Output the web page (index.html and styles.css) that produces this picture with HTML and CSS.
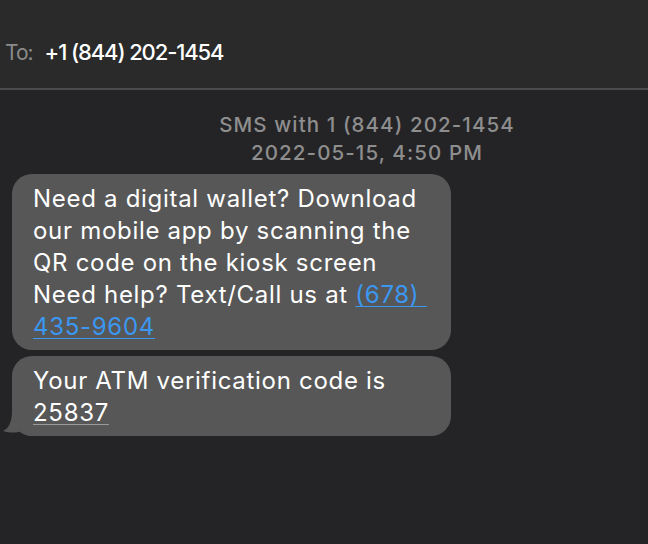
FILE: index.html
```html
<!DOCTYPE html>
<html>
<head>
<meta charset="utf-8">
<link rel="stylesheet" href="styles.css">
</head>
<body>
<div class="app">
  <header class="to-bar">
    <span class="to-label">To:</span>
    <span class="to-number">+1 (844) 202-1454</span>
  </header>
  <main class="thread">
    <div class="meta">
      <div>SMS with 1 (844) 202-1454</div>
      <div>2022-05-15, 4:50 PM</div>
    </div>
    <div class="bubbles">
      <div class="bubble">Need a digital wallet? Download our mobile app by scanning the QR code on the kiosk screen Need help? Text/Call us at <a class="link" href="#">(678)&nbsp;<br><span class="nowrap">435-9604</span></a></div>
      <div class="bubble last">Your ATM verification code is <span class="code">25837</span>
        <svg class="tail" width="30" height="25" viewBox="0 0 30 25"><path d="M9 0 C9 12 5 18 0 20 C7 22 13 22 18 20 C21 23 25 25 29 25 L29 0 Z" fill="#575757"/></svg>
      </div>
    </div>
  </main>
</div>
</body>
</html>
```
FILE: styles.css
```css
html, body {
  margin: 0;
  padding: 0;
  background: #242426;
}
.app {
  width: 648px;
  height: 544px;
  overflow: hidden;
  font-family: Inter, "Liberation Sans", sans-serif;
  background: #242426;
}
.to-bar {
  box-sizing: border-box;
  height: 90px;
  background: #2a2a2a;
  border-bottom: 2px solid #4b4b4b;
  display: flex;
  align-items: baseline;
  padding: 39px 0 0 5px;
}
.to-label {
  color: #8b8b8b;
  font-size: 21px;
  letter-spacing: -1px;
  margin-right: 12px;
}
.to-number {
  color: #ffffff;
  font-size: 22px;
  font-weight: 500;
  letter-spacing: -1.1px;
}
.thread {
  padding-top: 21px;
}
.meta {
  width: 734px;
  text-align: center;
  color: #8e8e8e;
  font-size: 20.5px;
  font-weight: 500;
  letter-spacing: 1.1px;
  line-height: 28px;
}
.bubbles {
  display: flex;
  flex-direction: column;
  gap: 6px;
  margin-top: 7px;
  padding-left: 12px;
}
.bubble {
  position: relative;
  width: 439px;
  box-sizing: border-box;
  background: #575757;
  border-radius: 20px;
  padding: 9px 8px 7px 21px;
  color: #ffffff;
  font-size: 24px;
  letter-spacing: 0.7px;
  line-height: 32px;
}
.link {
  color: #3b97f1;
  text-decoration: underline;
  text-decoration-thickness: 1px;
  text-underline-offset: 3px;
}
.nowrap {
  white-space: nowrap;
}
.code {
  text-decoration: underline;
  text-decoration-color: #9a9a9a;
  text-decoration-thickness: 1px;
  text-underline-offset: 3px;
}
.tail {
  position: absolute;
  left: -9px;
  bottom: 0;
}
```
